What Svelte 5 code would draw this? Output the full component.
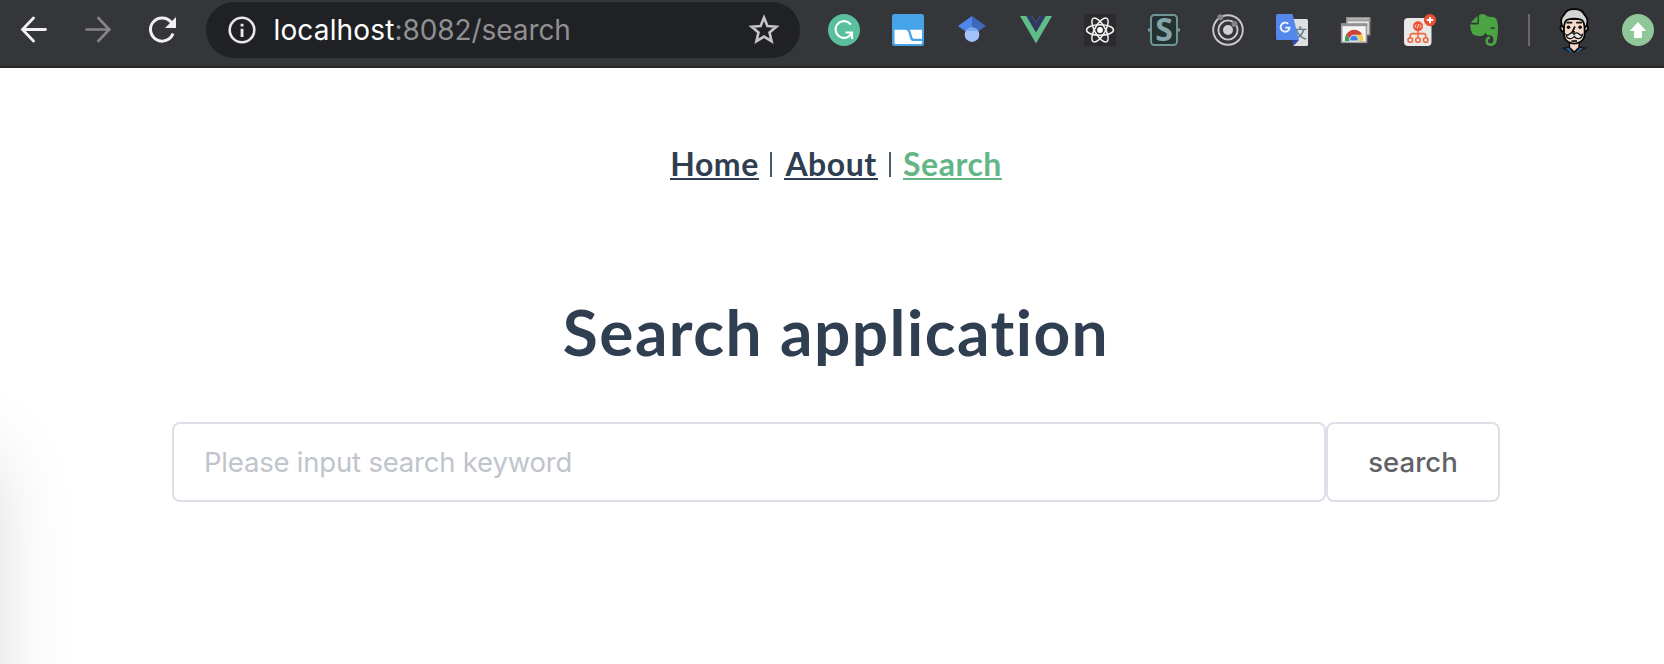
<script>
  const links = [
    { label: 'Home', cls: 'home' },
    { label: 'About', cls: 'about' },
    { label: 'Search', cls: 'active' }
  ];
</script>

<div class="page">
  <header class="toolbar">
    <svg class="slot" viewBox="0 0 64 66">
      <path d="M43.5 29.5H21M31.5 18 20.5 29.5 31.5 41" fill="none" stroke="#f1f1f4" stroke-width="2.8" stroke-linecap="round" stroke-linejoin="miter" />
    </svg>
    <svg class="slot" viewBox="0 0 64 66">
      <path d="M20.5 29.5H42.5M32.3 18 43.3 29.5 32.3 41" fill="none" stroke="#858588" stroke-width="2.7" stroke-linecap="round" />
    </svg>
    <svg class="slot" viewBox="0 0 64 66">
      <path d="M41.2 22.3A11.6 11.6 0 1 0 43 33.5" fill="none" stroke="#f1f1f4" stroke-width="3" />
      <path d="M46 17V28H35Z" fill="#f1f1f4" />
    </svg>

    <div class="omnibox">
      <svg class="info" viewBox="0 0 28 28">
        <circle cx="14" cy="14" r="12.3" fill="none" stroke="#e8e8ea" stroke-width="2.6" />
        <path d="M12.6 7.7h2.9v2.9h-2.9zM12.6 12.7h2.9v8.2h-2.9z" fill="#e8e8ea" />
      </svg>
      <span class="url"><b>localhost</b><i>:8082/search</i></span>
      <svg class="star" viewBox="0 0 32 32">
        <path d="M16 3.6 19.4 12 28.3 12.7 21.5 18.5 23.6 27.3 16 22.6 8.4 27.3 10.5 18.5 3.7 12.7 12.6 12Z" fill="none" stroke="#c6c6c8" stroke-width="2.6" />
      </svg>
    </div>

    <div class="extensions">
      <svg class="slot" viewBox="0 0 64 66">
        <circle cx="32" cy="30" r="16" fill="#5abf9c" />
        <path d="M38.8 24.7A8.4 8.4 0 1 0 36.5 36.6Q38.3 35.4 39.2 33.2" fill="none" stroke="#fff" stroke-width="2.2" />
        <path d="M33.5 32.5H40V39" fill="none" stroke="#fff" stroke-width="2.2" />
      </svg>
      <svg class="slot" viewBox="0 0 64 66">
        <rect x="16" y="14" width="32" height="32" rx="2.5" fill="#45a4e8" />
        <path d="M18.5 29.7H29.5Q31.7 29.7 32.4 32.2L34.3 39Q34.8 41 37 41H46V42.5Q46 44 44.5 44H20Q18.5 44 18.5 42.5Z" fill="#fff" />
        <path d="M33.3 29.7H46V38.7H38Q36.6 38.7 36.2 37.1L34.7 32Q34.3 30.5 33.3 29.7Z" fill="#fff" />
      </svg>
      <svg class="slot" viewBox="0 0 64 66">
        <path d="M32 16V36L18 26Z" fill="#4f86ec" />
        <path d="M32 16V36L46 26Z" fill="#3e68b8" />
        <circle cx="32" cy="34.7" r="7.3" fill="#a4c2fa" />
        <path d="M25.6 31a7.3 7.3 0 0 1 12.8 0Z" fill="#7ea5ef" />
      </svg>
      <svg class="slot" viewBox="0 0 64 66">
        <path d="M16 16H48L32 43.5Z" fill="#5fbd88" />
        <path d="M22.3 16H41.7L32 32.5Z" fill="#333761" />
        <path d="M28 16H36L32 22.5Z" fill="#35363a" />
        <path d="M28 16 32 22.5 36 16" fill="none" stroke="#3c5a70" stroke-width="1" />
      </svg>
      <svg class="slot" viewBox="0 0 64 66">
        <rect x="16" y="14" width="32" height="32" rx="3" fill="#2b2b2e" />
        <g fill="none" stroke="#f4f4f4" stroke-width="1.5">
          <ellipse cx="32" cy="30" rx="13.5" ry="5.2" />
          <ellipse cx="32" cy="30" rx="13.5" ry="5.2" transform="rotate(60 32 30)" />
          <ellipse cx="32" cy="30" rx="13.5" ry="5.2" transform="rotate(120 32 30)" />
        </g>
        <circle cx="32" cy="30" r="2.9" fill="#fff" />
      </svg>
      <svg class="slot" viewBox="0 0 64 66">
        <path d="M16 28.5h4v3h-4zM44 28.5h4v3h-4z" fill="#76999b" />
        <rect x="19" y="15" width="26" height="30" rx="3.5" fill="#243331" stroke="#6f9495" stroke-width="2" />
        <text x="32" y="41.3" text-anchor="middle" font-family="Open Sans, sans-serif" font-weight="700" font-size="32" fill="#84a4a8">S</text>
      </svg>
      <svg class="slot" viewBox="0 0 64 66">
        <g fill="none" stroke="#c9c9ca">
          <circle cx="32" cy="30" r="14.8" stroke-width="1.9" />
          <circle cx="32" cy="30" r="9.6" stroke-width="1.9" />
        </g>
        <circle cx="32" cy="30" r="5" fill="#cfcfd0" />
        <circle cx="24.3" cy="17.2" r="3" fill="#858587" />
        <circle cx="38.5" cy="24" r="3" fill="#858587" />
      </svg>
      <svg class="slot" viewBox="0 0 64 66">
        <path d="M32 19H46.5Q48 19 48 20.5V44.5Q48 46 46.5 46H33.5Z" fill="#dedfe0" />
        <text x="40" y="37.6" text-anchor="middle" font-family="Noto Sans CJK SC, sans-serif" font-size="14" font-weight="500" fill="#607d8b">文</text>
        <path d="M32 40H39L33.7 45.8Z" fill="#3048a8" />
        <path d="M17.5 14H32.5L39 40H17.5Q16 40 16 38.5V15.5Q16 14 17.5 14Z" fill="#5487ec" />
        <path d="M28.2 23.9A4.5 4.5 0 1 0 29.6 27.6H25.3" fill="none" stroke="#f2f5ff" stroke-width="1.9" />
      </svg>
      <svg class="slot" viewBox="0 0 64 66">
        <rect x="22.8" y="17.8" width="22.8" height="17" fill="#e4e4e4" stroke="#8f8f8f" stroke-width="1.6" />
        <path d="M22 20.3H46.4" stroke="#999" stroke-width="2" />
        <rect x="17.7" y="24" width="24.8" height="18.3" fill="#f5f5f5" stroke="#9b9b9b" stroke-width="1.6" />
        <path d="M17 25H43.3" stroke="#929292" stroke-width="2.4" />
        <path d="M20.8 41A9.3 9.3 0 0 1 22.5 34L27 41Z" fill="#3e9c57" />
        <path d="M22.3 34.3A9.3 9.3 0 0 1 38.3 34.3L31 36 26 39Z" fill="#ce4438" />
        <path d="M31 34.7H38.2A9.3 9.3 0 0 1 39.2 41H32Z" fill="#f5cd4a" />
        <path d="M26 41A4.3 4.3 0 1 1 34 41Z" fill="#4280ef" stroke="#fff" stroke-width=".8" />
      </svg>
      <svg class="slot" viewBox="0 0 64 66">
        <rect x="16" y="18" width="27.5" height="28" rx="4" fill="#e9e9e9" />
        <g fill="none" stroke="#ee6a40" stroke-width="1.6">
          <path d="M30 30V37.5M22.3 37.5V35.5Q22.3 33.6 24.2 33.6H35.8Q37.7 33.6 37.7 35.5V37.5" />
          <circle cx="22.3" cy="40" r="2.3" /><circle cx="30" cy="40" r="2.3" /><circle cx="37.7" cy="40" r="2.3" />
        </g>
        <circle cx="30" cy="26.2" r="5" fill="#ec4f31" />
        <path d="M28.2 24.5 26.7 26.2 28.2 27.9M31.8 24.5 33.3 26.2 31.8 27.9M30.6 24 29.4 28.4" fill="none" stroke="#fff" stroke-width=".8" />
        <circle cx="42" cy="20.1" r="6.1" fill="#eb4f34" />
        <path d="M42 16.9V23.3M38.8 20.1H45.2" stroke="#fff" stroke-width="2" />
      </svg>
      <svg class="slot" viewBox="0 0 64 66">
        <path d="M27 15.2Q29 13.6 32 14.2 34.7 14.8 35.3 16.4L41.5 17.2Q44.5 17.7 45.2 21 46.5 27 45.9 33 45.4 39 44.3 42.3 43 46 38.5 46 33.4 45.8 33.3 41 33.4 36.5 38 36.4V38.6Q35.8 39.2 35.9 41.2 36.2 43.5 38.8 43.4 41.6 43 41.5 39.4 41.3 35.5 37.2 35.3 34.5 35.2 33.2 32.5 32.6 35.8 28.8 36 23 36 20.7 34 18.7 31.5 18.1 24.4H25.2Q27 24.4 27 22.4Z" fill="#4aa441" />
        <path d="M18.5 22.7 25.5 15.7V22.7Z" fill="#4aa441" />
        <path d="M38 28.7Q38.6 26.8 40.8 27 42.8 27.2 43.4 29.3 40.4 28.3 38 28.7Z" fill="#293b2b" />
      </svg>
    </div>

    <span class="divider"></span>

    <svg class="slot" viewBox="0 0 64 66">
      <path d="M19.5 47.7Q24 47 28 46H36.5Q41 47 45 47.7L36.5 52H27Z" fill="#101820" />
      <path d="M23.5 48.3 27.5 47.8 30.5 52H28ZM41 48.3 37 47.8 34 52H36.5Z" fill="#285b82" />
      <path d="M27.5 42V47.5L32.2 52 37 47.5V42Z" fill="#f7d6c6" stroke="#080808" stroke-width="1.3" />
      <path d="M21.2 24.5Q18.3 25.5 18.4 28.5 19 31.5 22 31.8M43.4 24.5Q46.1 25.5 46 28.5 45.4 31.5 42.4 31.8" fill="#f7d6c6" stroke="#080808" stroke-width="1.8" />
      <path d="M22 19H42.6V34Q42.6 39 38.5 41.8 32.3 45.3 26 41.8 22 39 22 34Z" fill="#f5d9ca" stroke="#080808" stroke-width="1.8" />
      <path d="M20 26Q17.5 18.5 22 14.8 24.5 9 32 9 40 9 42.5 14.8 47 18.5 44.6 26L42.8 27.5Q42 21.5 39.5 19.8 32 17.5 25 19.8 22.5 21.5 21.9 27.5Z" fill="#d2d4d5" stroke="#080808" stroke-width="1.8" />
      <path d="M24.5 22.7H30.3M34.2 22.7H40M33 26.5 30.3 31.8H33" fill="none" stroke="#111" stroke-width="1.7" />
      <circle cx="26.5" cy="27.3" r="1.8" fill="#111" /><circle cx="38.1" cy="27.3" r="1.8" fill="#111" />
      <path d="M32.2 34.3Q34.5 31.7 37 34 39 36 40.3 34.8 39.4 39 35.7 38.6 33.5 38.3 32.2 36.5 31 38.3 28.8 38.6 25 39 24.1 34.8 25.4 36 27.5 34 30 31.7 32.2 34.3Z" fill="#e5e5e4" stroke="#111" stroke-width="1.3" />
      <path d="M29.5 41H35" stroke="#111" stroke-width="1.7" />
    </svg>
    <svg class="slot" viewBox="0 0 64 66">
      <circle cx="32" cy="30" r="16" fill="#90c798" />
      <path d="M32 22 40.2 31H35.9V38H28.1V31H23.8Z" fill="#fff" />
    </svg>
  </header>

  <main>
    <nav>
      {#each links as link, n}
        {#if n > 0}<span class="bar"></span>{/if}
        <a class={link.cls} href="#{link.label}"><span>{link.label}</span></a>
      {/each}
    </nav>
    <h1>Search application</h1>
    <form class="search">
      <input type="text" placeholder="Please input search keyword" />
      <button type="button">search</button>
    </form>
  </main>
  <div class="shade"></div>
</div>

<style>
  :global(body) { margin: 0; background: #fff; }
  * { box-sizing: border-box; }
  .page { position: relative; width: 1664px; height: 664px; overflow: hidden; background: #fff; }
  .toolbar { display: flex; height: 68px; padding-left: 2px; background: #35363a; border-bottom: 2px solid #282529; }
  .slot { flex: none; display: block; width: 64px; height: 66px; }
  .omnibox { flex: none; display: flex; align-items: center; width: 594px; height: 56px; margin: 2px 12px 0; padding: 0 20px 0 22px; border-radius: 28px; background: #202124; }
  .info { flex: none; width: 28px; height: 28px; }
  .url { flex: 1; margin-left: 17.5px; font: 400 28px/34px Inter, sans-serif; white-space: nowrap; }
  .url b { font-weight: 400; color: #fff; letter-spacing: 0.15px; }
  .url i { font-style: normal; color: #8f9093; letter-spacing: -0.08px; }
  .star { flex: none; width: 32px; height: 32px; }
  .extensions { display: flex; flex: none; }
  .divider { flex: none; width: 2px; height: 32px; margin: 14px 12px 0; background: #69696c; }
  main { display: flex; flex-direction: column; align-items: center; padding: 76px 164px 0 172px; }
  nav { display: flex; align-items: flex-start; height: 40px; }
  a { display: block; height: 36px; border-bottom: 2px solid currentColor; color: #2f3e50; font: 700 32px/40px Lato, sans-serif; letter-spacing: 0.5px; text-decoration: none; white-space: nowrap; text-align: center; }
  .home { width: 89px; }
  .about { width: 94px; }
  .active { width: 99px; color: #64b687; }
  .bar { width: 2px; height: 25px; margin: 8px 12px 0 11px; background: #4b5869; }
  h1 { margin: 103px 0 0; height: 90px; color: #2f3e50; font: 700 64px/90px Lato, sans-serif; letter-spacing: 1.45px; font-variant-ligatures: none; white-space: nowrap; }
  .search { display: flex; width: 1328px; margin: 45px 0 0; }
  input, button { height: 80px; border: 2px solid #dcdfe6; border-radius: 8px; background: #fff; font: 400 27.5px/34px Inter, sans-serif; outline: none; }
  input { width: 1154px; padding: 0 30px; letter-spacing: -0.2px; }
  input::placeholder { color: #c0c4cc; opacity: 1; }
  button { width: 174px; padding: 0; color: #606266; font-weight: 500; }
  .shade { position: absolute; left: -310px; top: 460px; width: 300px; height: 600px; box-shadow: 0 0 76px rgba(0, 0, 0, .17); pointer-events: none; }
</style>
